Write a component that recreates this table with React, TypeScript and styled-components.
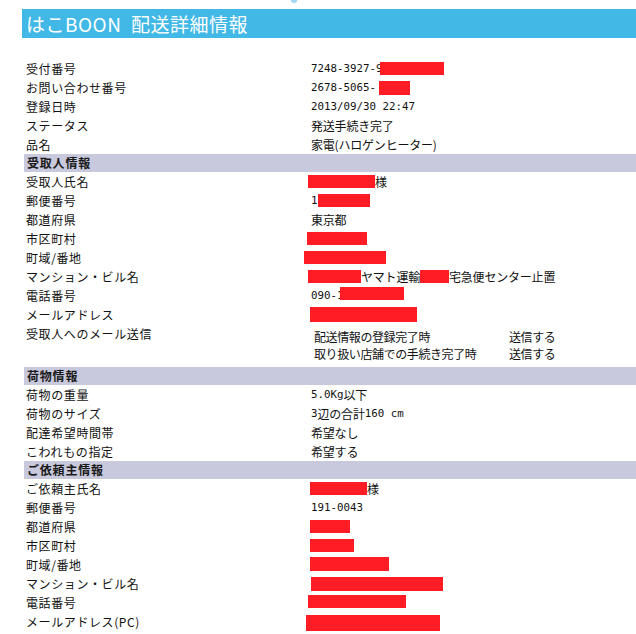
import React from "react";
import styled, { createGlobalStyle } from "styled-components";

const GlobalStyle = createGlobalStyle`
  html, body { margin: 0; padding: 0; background: #ffffff; }
  body {
    font-family: "Noto Sans CJK JP", "Noto Sans", sans-serif;
    font-size: 12px;
    color: #111111;
  }
`;

const Page = styled.div`
  width: 636px;
  display: flex;
  flex-direction: column;
`;

const TopStrip = styled.div`
  height: 9px;
  display: flex;
  padding-left: 290px;
`;

const Header = styled.h1`
  margin: 0 0 0 22px;
  height: 29px;
  background: #42b8e6;
  color: #ffffff;
  font-size: 19px;
  font-weight: normal;
  line-height: 29px;
  padding-left: 4px;
  letter-spacing: 0.5px;
  white-space: pre;
`;

const Table = styled.div`
  margin: 21px 0 0 24px;
  display: flex;
  flex-direction: column;
`;

const Row = styled.div<{ $tall?: boolean }>`
  display: grid;
  grid-template-columns: 287px 1fr;
  height: ${(p) => (p.$tall ? "43px" : "19px")};
  align-items: ${(p) => (p.$tall ? "start" : "center")};
  line-height: 19px;
`;

const Label = styled.div`
  padding-left: 2px;
  letter-spacing: 0.6px;
  white-space: nowrap;
`;

const Value = styled.div`
  display: flex;
  align-items: center;
  white-space: pre;
  letter-spacing: -0.2px;
`;

const Num = styled.span`
  font-family: "DejaVu Sans Mono", "Liberation Mono", monospace;
  font-size: 10.8px;
  letter-spacing: 0;
  white-space: pre;
`;

const Section = styled.div`
  height: 18px;
  line-height: 18px;
  background: #c8c9dc;
  font-weight: bold;
  padding-left: 3px;
  letter-spacing: 0.8px;
  color: #1a1a1a;
`;

const Redact = styled.span<{ $w: number; $h?: number; $dx?: number; $dy?: number }>`
  display: inline-block;
  flex: none;
  width: ${(p) => p.$w}px;
  height: ${(p) => p.$h ?? 13}px;
  background: #ff1c24;
  margin-left: ${(p) => p.$dx ?? 0}px;
  position: relative;
  top: ${(p) => p.$dy ?? 0}px;
`;

const Gap = styled.span<{ $w: number }>`
  display: inline-block;
  flex: none;
  width: ${(p) => p.$w}px;
`;

const MailTable = styled.div`
  display: grid;
  grid-template-columns: 195px auto;
  padding: 4px 0 0 3px;
  line-height: 17px;
  letter-spacing: -0.4px;
  white-space: nowrap;
`;

type R = { w: number; h?: number; dx?: number; dy?: number };

const Red = ({ w, h, dx, dy }: R) => <Redact $w={w} $h={h} $dx={dx} $dy={dy} />;

export default function App() {
  return (
    <>
      <GlobalStyle />
      <Page>
        <TopStrip>
          <svg width="8" height="4" viewBox="0 0 8 4">
            <ellipse cx="4" cy="0.5" rx="3" ry="2.5" fill="#9fd6f0" />
          </svg>
        </TopStrip>
        <Header>{"はこBOON  配送詳細情報"}</Header>
        <Table>
          <Row><Label>受付番号</Label><Value><Num>7248-3927-9</Num><Red w={64} dx={-3} /></Value></Row>
          <Row><Label>お問い合わせ番号</Label><Value><Num>2678-5065-</Num><Red w={31} h={14} dx={3} /></Value></Row>
          <Row><Label>登録日時</Label><Value><Num>2013/09/30 22:47</Num></Value></Row>
          <Row><Label>ステータス</Label><Value>発送手続き完了</Value></Row>
          <Row><Label>品名</Label><Value>家電(ハロゲンヒーター)</Value></Row>
          <Section>受取人情報</Section>
          <Row><Label>受取人氏名</Label><Value><Red w={67} dx={-3} /><Gap w={7} />様</Value></Row>
          <Row><Label>郵便番号</Label><Value><Num>1</Num><Red w={52} dx={0} /></Value></Row>
          <Row><Label>都道府県</Label><Value><Gap w={1} />東京都</Value></Row>
          <Row><Label>市区町村</Label><Value><Red w={60} dx={-4} /></Value></Row>
          <Row><Label>町域/番地</Label><Value><Red w={82} dx={-7} /></Value></Row>
          <Row><Label>マンション・ビル名</Label><Value><Red w={53} dx={-3} />ヤマト運輸<Red w={29} />宅急便センター止置</Value></Row>
          <Row><Label>電話番号</Label><Value><Num>090-1</Num><Red w={64} dx={-4} dy={-2} /></Value></Row>
          <Row><Label>メールアドレス</Label><Value><Red w={107} h={15} dx={-1} /></Value></Row>
          <Row $tall>
            <Label>受取人へのメール送信</Label>
            <MailTable>
              <span>配送情報の登録完了時</span><span>送信する</span>
              <span>取り扱い店舗での手続き完了時</span><span>送信する</span>
            </MailTable>
          </Row>
          <Section>荷物情報</Section>
          <Row><Label>荷物の重量</Label><Value><Num>5.0Kg</Num>以下</Value></Row>
          <Row><Label>荷物のサイズ</Label><Value><Num>3</Num>辺の合計<Num>160 cm</Num></Value></Row>
          <Row><Label>配達希望時間帯</Label><Value><Gap w={1} />希望なし</Value></Row>
          <Row><Label>こわれもの指定</Label><Value><Gap w={1} />希望する</Value></Row>
          <Section>ご依頼主情報</Section>
          <Row><Label>ご依頼主氏名</Label><Value><Red w={57} dx={-1} />様</Value></Row>
          <Row><Label>郵便番号</Label><Value><Num>191-0043</Num></Value></Row>
          <Row><Label>都道府県</Label><Value><Red w={40} dx={-1} /></Value></Row>
          <Row><Label>市区町村</Label><Value><Red w={44} dx={-1} /></Value></Row>
          <Row><Label>町域/番地</Label><Value><Red w={79} h={14} dx={-1} dy={-1} /></Value></Row>
          <Row><Label>マンション・ビル名</Label><Value><Red w={132} h={14} dx={0} /></Value></Row>
          <Row><Label>電話番号</Label><Value><Red w={98} dx={-3} dy={-1} /></Value></Row>
          <Row><Label>メールアドレス(PC)</Label><Value><Red w={134} h={16} dx={-5} dy={1} /></Value></Row>
        </Table>
      </Page>
    </>
  );
}
